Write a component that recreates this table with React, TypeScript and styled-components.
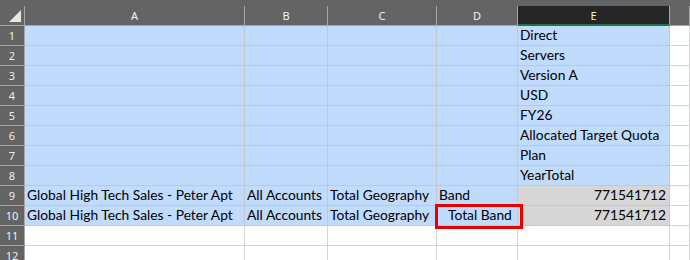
import React from "react";
import styled, { createGlobalStyle } from "styled-components";

const GlobalStyle = createGlobalStyle`
  html, body {
    margin: 0;
    padding: 0;
    background: #ffffff;
  }
`;

type Fill = "blue" | "gray" | "none";

const COLS = ["A", "B", "C", "D", "E"];
const ACTIVE_COL = "E";

const Wrapper = styled.div`
  position: relative;
  width: 690px;
  height: 260px;
  overflow: hidden;
`;

const Sheet = styled.div`
  display: grid;
  grid-template-columns: 25px 220px 83px 109px 81px 152px 1fr;
  grid-template-rows: 6px 20px repeat(12, 20px);
`;

const TopStrip = styled.div`
  grid-column: 1 / -1;
  background: #646464;
`;

const Corner = styled.div`
  box-sizing: border-box;
  background: #646464;
  border-right: 1px solid #a6a6a6;
  border-bottom: 1px solid #a6a6a6;
  display: flex;
  align-items: flex-end;
  justify-content: flex-end;
  padding: 0 3px 3px 0;

  svg {
    display: block;
  }
`;

const ColHeader = styled.div<{ $active?: boolean }>`
  box-sizing: border-box;
  background: ${(p) => (p.$active ? "#262626" : "#646464")};
  border-right: 1px solid #a6a6a6;
  border-bottom: ${(p) => (p.$active ? "2px solid #217346" : "1px solid #a6a6a6")};
  color: #f2f2f2;
  font-family: "Noto Sans", "Liberation Sans", sans-serif;
  font-size: 11px;
  display: flex;
  align-items: center;
  justify-content: center;
  padding-top: ${(p) => (p.$active ? "1px" : "0")};
`;

const RowHeader = styled.div`
  box-sizing: border-box;
  background: #646464;
  border-right: 1px solid #a6a6a6;
  border-bottom: 1px solid #a6a6a6;
  color: #f0f0f0;
  font-family: "Noto Sans", "Liberation Sans", sans-serif;
  font-size: 11px;
  display: flex;
  align-items: center;
  justify-content: center;
`;

const Cell = styled.div<{ $fill: Fill; $right?: boolean; $indent?: boolean }>`
  box-sizing: border-box;
  background: ${(p) =>
    p.$fill === "blue" ? "#c0dbfc" : p.$fill === "gray" ? "#d6d6d6" : "#ffffff"};
  border-right: 1px solid ${(p) => (p.$fill === "none" ? "#d4d4d4" : "#c4c8cc")};
  border-bottom: 1px solid ${(p) => (p.$fill === "none" ? "#d4d4d4" : "#c4c8cc")};
  color: #000000;
  font-family: Lato, "Liberation Sans", sans-serif;
  font-size: 13.8px;
  white-space: nowrap;
  overflow: hidden;
  display: flex;
  align-items: flex-end;
  justify-content: ${(p) => (p.$right ? "flex-end" : "flex-start")};
  padding: 0 3px 2px ${(p) => (p.$indent ? "11px" : "2px")};
  line-height: 16px;
`;

const Callout = styled.div`
  position: absolute;
  left: 435px;
  top: 204px;
  width: 88px;
  height: 25px;
  box-sizing: border-box;
  border: 3px solid #e60000;
  pointer-events: none;
`;

interface RowData {
  cells: string[];
  indentD?: boolean;
}

const headerRows: RowData[] = [
  "Direct",
  "Servers",
  "Version A",
  "USD",
  "FY26",
  "Allocated Target Quota",
  "Plan",
  "YearTotal",
].map((e) => ({ cells: ["", "", "", "", e] }));

const rows: RowData[] = [
  ...headerRows,
  {
    cells: ["Global High Tech Sales - Peter Apt", "All Accounts", "Total Geography", "Band", "771541712"],
  },
  {
    cells: ["Global High Tech Sales - Peter Apt", "All Accounts", "Total Geography", "Total Band", "771541712"],
    indentD: true,
  },
  { cells: ["", "", "", "", ""] },
  { cells: ["", "", "", "", ""] },
];

const App = () => {
  return (
    <Wrapper>
      <GlobalStyle />
      <Sheet>
        <TopStrip />
        <Corner>
          <svg width="12" height="12" viewBox="0 0 12 12">
            <polygon points="12,0 12,12 0,12" fill="#e6e6e6" />
          </svg>
        </Corner>
        {COLS.map((c) => (
          <ColHeader key={c} $active={c === ACTIVE_COL}>
            {c}
          </ColHeader>
        ))}
        <ColHeader />

        {rows.map((row, i) => {
          const selected = i < 10;
          const numeric = i === 8 || i === 9;
          return (
            <React.Fragment key={i}>
              <RowHeader>{i + 1}</RowHeader>
              {row.cells.map((text, j) => (
                <Cell
                  key={j}
                  $fill={!selected ? "none" : j === 4 && numeric ? "gray" : "blue"}
                  $right={j === 4 && numeric}
                  $indent={j === 3 && row.indentD}
                >
                  {text}
                </Cell>
              ))}
              <Cell $fill="none" />
            </React.Fragment>
          );
        })}
      </Sheet>
      <Callout />
    </Wrapper>
  );
};

export default App;
